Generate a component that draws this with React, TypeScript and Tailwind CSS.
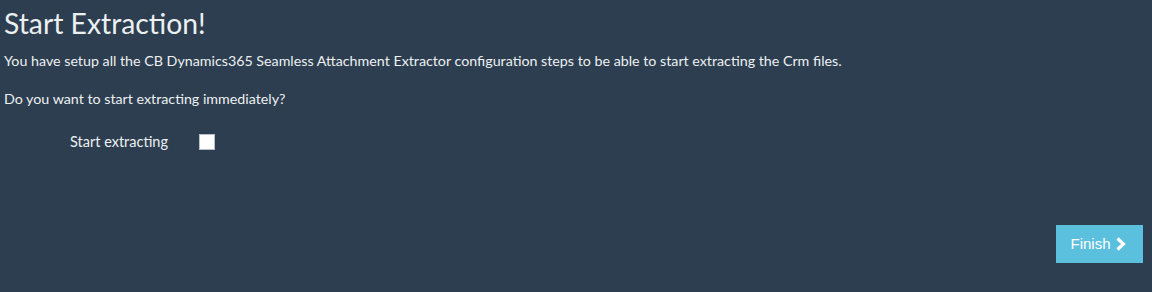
import { useState } from "react";

function ChevronRight() {
  return (
    <svg width="12" height="14" viewBox="0 0 12 14" aria-hidden="true">
      <path d="M2.5 1.5 L8.5 7 L2.5 12.5" fill="none" stroke="currentColor" strokeWidth="3.2" strokeLinecap="butt" strokeLinejoin="miter" />
    </svg>
  );
}

export default function App() {
  const [checked, setChecked] = useState(false);

  return (
    <div className="h-[292px] w-full bg-[#2c3e50] text-[#ecf0f1] font-['Lato',_'Liberation_Sans',_sans-serif] overflow-hidden">
      <div className="px-[4px] pt-[5px]">
        <h1 className="text-[28.3px] leading-[36px] font-normal">Start Extraction!</h1>
        <p className="mt-[10px] text-[14.25px] leading-[19px]">
          You have setup all the CB Dynamics365 Seamless Attachment Extractor configuration steps to be able to start extracting the Crm files.
        </p>
        <p className="mt-[19px] text-[14.25px] leading-[19px]">Do you want to start extracting immediately?</p>
        <div className="mt-[24px] flex items-center">
          <label htmlFor="start" className="w-[195px] pl-[66px] text-[14.5px] leading-[19px]">
            Start extracting
          </label>
          <input
            id="start"
            type="checkbox"
            checked={checked}
            onChange={(e) => setChecked(e.target.checked)}
            className="appearance-none w-[16px] h-[16px] bg-white border border-[#b8c0c8] m-0"
          />
        </div>
      </div>
      <div className="mt-[74px] flex justify-end pr-[9px]">
        <button
          type="button"
          className="h-[38px] w-[87px] bg-[#5bc0de] text-white flex items-center justify-center gap-[4px] pr-[2px] font-['Liberation_Sans',_Arial,_sans-serif] text-[15px]"
        >
          <span>Finish</span>
          <ChevronRight />
        </button>
      </div>
    </div>
  );
}
